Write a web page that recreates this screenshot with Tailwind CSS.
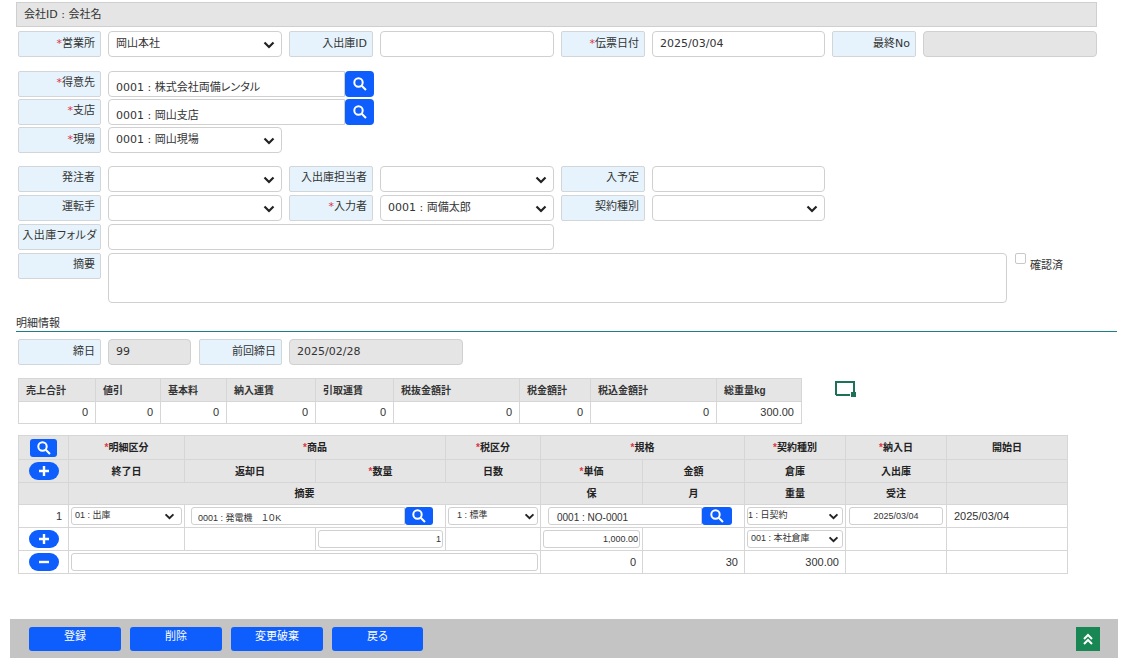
<!DOCTYPE html>
<html lang="ja">
<head>
<meta charset="UTF-8">
<title>入出庫</title>
<script src="https://cdn.jsdelivr.net/npm/@tailwindcss/browser@4"></script>
</head>
<body class="bg-white text-[11px] text-[#333] [font-feature-settings:'palt'] font-['DejaVu_Sans','Noto_Sans_CJK_JP',sans-serif]">
<div class="w-[1140px] h-[670px] overflow-hidden relative pt-[2px]">

  <!-- company bar -->
  <div class="ml-[16px] w-[1081px] h-[25px] bg-[#e5e5e5] border border-[#cfcfcf] pl-[7px] leading-[23px]">会社ID : 会社名</div>

  <!-- form head -->
  <div class="ml-[18px] mt-[4px] grid grid-cols-[83px_174px_84px_174px_84px_173px_84px_174px] gap-x-[7px] h-[26px] [&>label]:bg-[#e6f3fc] [&>label]:border [&>label]:border-[#d2d6d9] [&>label]:rounded-[2px] [&>label]:text-right [&>label]:pr-[5px] [&>label]:leading-[24px] [&>input]:border [&>input]:border-[#d0d0d0] [&>input]:rounded-[4px] [&>input]:px-[7px]">
    <label><span class="text-[#dc3545]">*</span>営業所</label>
    <div class="relative">
      <select class="appearance-none w-full h-[26px] border border-[#d0d0d0] rounded-[4px] pl-[7px] bg-white"><option>岡山本社</option></select>
      <svg class="absolute right-[7px] top-[10px] w-[12px] h-[8px]" viewBox="0 0 12 8" fill="none" stroke="#222" stroke-width="2.2"><path d="M1.5 1.5 6 6l4.500-4.500"/></svg>
    </div>
    <label>入出庫ID</label>
    <input type="text" value="">
    <label><span class="text-[#dc3545]">*</span>伝票日付</label>
    <input type="text" value="2025/03/04">
    <label>最終No</label>
    <input type="text" value="" class="bg-[#e5e5e5]">
  </div>

  <!-- customer -->
  <div class="ml-[18px] mt-[14px] flex gap-x-[7px] h-[26px]">
    <label class="w-[83px] bg-[#e6f3fc] border border-[#d2d6d9] rounded-[2px] text-right pr-[5px] leading-[22px]"><span class="text-[#dc3545]">*</span>得意先</label>
    <div class="flex">
      <input type="text" value="0001 : 株式会社両備レンタル" class="w-[237px] h-[26px] border border-[#d0d0d0] rounded-l-[4px] pl-[7px] pt-[4px]">
      <button class="w-[29px] h-[26px] bg-[#0d5efc] rounded-[4px] flex items-center justify-center"><svg class="w-[14px] h-[14px]" viewBox="0 0 14 14" fill="none" stroke="#fff" stroke-width="2"><circle cx="5.500" cy="5.500" r="4.200"/><path d="m8.700 8.700 4.300 4.300"/></svg></button>
    </div>
  </div>
  <div class="ml-[18px] mt-[2px] flex gap-x-[7px] h-[26px]">
    <label class="w-[83px] bg-[#e6f3fc] border border-[#d2d6d9] rounded-[2px] text-right pr-[5px] leading-[22px]"><span class="text-[#dc3545]">*</span>支店</label>
    <div class="flex">
      <input type="text" value="0001 : 岡山支店" class="w-[237px] h-[26px] border border-[#d0d0d0] rounded-l-[4px] pl-[7px] pt-[4px]">
      <button class="w-[29px] h-[26px] bg-[#0d5efc] rounded-[4px] flex items-center justify-center"><svg class="w-[14px] h-[14px]" viewBox="0 0 14 14" fill="none" stroke="#fff" stroke-width="2"><circle cx="5.500" cy="5.500" r="4.200"/><path d="m8.700 8.700 4.300 4.300"/></svg></button>
    </div>
  </div>
  <div class="ml-[18px] mt-[2px] flex gap-x-[7px] h-[26px]">
    <label class="w-[83px] bg-[#e6f3fc] border border-[#d2d6d9] rounded-[2px] text-right pr-[5px] leading-[24px]"><span class="text-[#dc3545]">*</span>現場</label>
    <div class="relative w-[174px]">
      <select class="appearance-none w-full h-[26px] border border-[#d0d0d0] rounded-[4px] pl-[7px] bg-white"><option>0001 : 岡山現場</option></select>
      <svg class="absolute right-[7px] top-[10px] w-[12px] h-[8px]" viewBox="0 0 12 8" fill="none" stroke="#222" stroke-width="2.2"><path d="M1.5 1.5 6 6l4.500-4.500"/></svg>
    </div>
  </div>

  <!-- people -->
  <div class="ml-[18px] mt-[13px] grid grid-cols-[83px_174px_84px_174px_84px_173px] gap-x-[7px] gap-y-[3px] auto-rows-[26px] [&>label]:bg-[#e6f3fc] [&>label]:border [&>label]:border-[#d2d6d9] [&>label]:rounded-[2px] [&>label]:text-right [&>label]:pr-[5px] [&>label]:leading-[22px] [&>input]:border [&>input]:border-[#d0d0d0] [&>input]:rounded-[4px] [&>input]:px-[7px]">
    <label>発注者</label>
    <div class="relative">
      <select class="appearance-none w-full h-[26px] border border-[#d0d0d0] rounded-[4px] pl-[7px] bg-white"><option></option></select>
      <svg class="absolute right-[7px] top-[10px] w-[12px] h-[8px]" viewBox="0 0 12 8" fill="none" stroke="#222" stroke-width="2.2"><path d="M1.5 1.5 6 6l4.500-4.500"/></svg>
    </div>
    <label>入出庫担当者</label>
    <div class="relative">
      <select class="appearance-none w-full h-[26px] border border-[#d0d0d0] rounded-[4px] pl-[7px] bg-white"><option></option></select>
      <svg class="absolute right-[7px] top-[10px] w-[12px] h-[8px]" viewBox="0 0 12 8" fill="none" stroke="#222" stroke-width="2.2"><path d="M1.5 1.5 6 6l4.500-4.500"/></svg>
    </div>
    <label>入予定</label>
    <input type="text" value="">

    <label>運転手</label>
    <div class="relative">
      <select class="appearance-none w-full h-[26px] border border-[#d0d0d0] rounded-[4px] pl-[7px] bg-white"><option></option></select>
      <svg class="absolute right-[7px] top-[10px] w-[12px] h-[8px]" viewBox="0 0 12 8" fill="none" stroke="#222" stroke-width="2.2"><path d="M1.5 1.5 6 6l4.500-4.500"/></svg>
    </div>
    <label><span class="text-[#dc3545]">*</span>入力者</label>
    <div class="relative">
      <select class="appearance-none w-full h-[26px] border border-[#d0d0d0] rounded-[4px] pl-[7px] bg-white"><option>0001 : 両備太郎</option></select>
      <svg class="absolute right-[7px] top-[10px] w-[12px] h-[8px]" viewBox="0 0 12 8" fill="none" stroke="#222" stroke-width="2.2"><path d="M1.5 1.5 6 6l4.500-4.500"/></svg>
    </div>
    <label>契約種別</label>
    <div class="relative">
      <select class="appearance-none w-full h-[26px] border border-[#d0d0d0] rounded-[4px] pl-[7px] bg-white"><option></option></select>
      <svg class="absolute right-[7px] top-[10px] w-[12px] h-[8px]" viewBox="0 0 12 8" fill="none" stroke="#222" stroke-width="2.2"><path d="M1.5 1.5 6 6l4.500-4.500"/></svg>
    </div>

    <label class="whitespace-nowrap tracking-[0.5px] !pr-[3px]">入出庫フォルダ</label>
    <input type="text" value="" class="col-span-3">
  </div>

  <!-- memo -->
  <div class="ml-[18px] mt-[3px] flex gap-x-[7px] h-[50px]">
    <label class="w-[83px] h-[26px] bg-[#e6f3fc] border border-[#d2d6d9] rounded-[2px] text-right pr-[5px] leading-[22px]">摘要</label>
    <textarea class="w-[899px] h-[50px] border border-[#d0d0d0] rounded-[4px] resize-none"></textarea>
    <div class="flex ml-[1px]">
      <input type="checkbox" class="appearance-none w-[11px] h-[11px] border border-[#c8c8c8] rounded-[2px]">
      <span class="ml-[4px] mt-[5px] leading-[16px]">確認済</span>
    </div>
  </div>

  <!-- detail heading -->
  <div class="ml-[16px] mt-[11px] w-[1101px] h-[18px] border-b border-[#1d7f86] leading-[19px] text-[#333]">明細情報</div>

  <div class="ml-[18px] mt-[7px] flex gap-x-[7px] h-[26px]">
    <label class="w-[83px] bg-[#e6f3fc] border border-[#d2d6d9] rounded-[2px] text-right pr-[5px] leading-[24px]">締日</label>
    <input type="text" value="99" class="w-[83px] bg-[#e5e5e5] border border-[#d0d0d0] rounded-[4px] px-[7px]">
    <label class="ml-[1px] w-[83px] bg-[#e6f3fc] border border-[#d2d6d9] rounded-[2px] text-right pr-[5px] leading-[24px]">前回締日</label>
    <input type="text" value="2025/02/28" class="w-[174px] bg-[#e5e5e5] border border-[#d0d0d0] rounded-[4px] px-[7px]">
  </div>

  <!-- totals -->
  <div class="ml-[18px] mt-[13px] flex font-['Liberation_Sans','Noto_Sans_CJK_JP',sans-serif]">
    <table class="table-fixed border-collapse w-[783px] text-[11px] [&_td]:border [&_td]:border-[#d6d6d6] [&_td]:text-right [&_td]:pr-[7px] [&_td]:h-[22px] [&_th]:border [&_th]:border-[#d6d6d6] [&_th]:bg-[#e5e5e5] [&_th]:text-left [&_th]:pl-[7px] [&_th]:h-[23px] [&_th]:text-[10px] [&_th]:font-bold">
      <colgroup>
        <col class="w-[77px]"><col class="w-[65px]"><col class="w-[66px]"><col class="w-[89px]"><col class="w-[78px]"><col class="w-[126px]"><col class="w-[71px]"><col class="w-[126px]"><col class="w-[85px]">
      </colgroup>
      <tr><th>売上合計</th><th>値引</th><th>基本料</th><th>納入運賃</th><th>引取運賃</th><th>税抜金額計</th><th>税金額計</th><th>税込金額計</th><th>総重量kg</th></tr>
      <tr><td>0</td><td>0</td><td>0</td><td>0</td><td>0</td><td>0</td><td>0</td><td>0</td><td>300.00</td></tr>
    </table>
    <svg class="ml-[33px] mt-[3px] w-[21px] h-[16px]" viewBox="0 0 21 16" fill="none"><path d="M1 14V1h18v10M1 14h14" stroke="#1b7259" stroke-width="2"/><rect x="16" y="11" width="5" height="5" fill="#1b7259"/></svg>
  </div>

  <!-- detail table -->
  <table class="ml-[18px] mt-[11px] table-fixed border-collapse w-[1049px] text-[10px] font-['Liberation_Sans','Noto_Sans_CJK_JP',sans-serif] [&_td]:border [&_td]:border-[#d6d6d6] [&_th]:border [&_th]:border-[#d6d6d6] [&_th]:bg-[#e5e5e5] [&_th]:text-center [&_th]:font-bold [&_th]:text-[10px] [&_th]:text-[#222]">
    <colgroup>
      <col class="w-[50px]"><col class="w-[116px]"><col class="w-[131px]"><col class="w-[130px]"><col class="w-[95px]"><col class="w-[102px]"><col class="w-[102px]"><col class="w-[101px]"><col class="w-[101px]"><col class="w-[121px]">
    </colgroup>
    <tr class="h-[24px]">
      <th><button class="mx-auto w-[27px] h-[18px] bg-[#0d5efc] rounded-[3px] flex items-center justify-center"><svg class="w-[14px] h-[14px]" viewBox="0 0 14 14" fill="none" stroke="#fff" stroke-width="2"><circle cx="5.500" cy="5.500" r="4.200"/><path d="m8.700 8.700 4.300 4.300"/></svg></button></th>
      <th><span class="text-[#dc3545]">*</span>明細区分</th>
      <th colspan="2"><span class="text-[#dc3545]">*</span>商品</th>
      <th><span class="text-[#dc3545]">*</span>税区分</th>
      <th colspan="2"><span class="text-[#dc3545]">*</span>規格</th>
      <th><span class="text-[#dc3545]">*</span>契約種別</th>
      <th><span class="text-[#dc3545]">*</span>納入日</th>
      <th>開始日</th>
    </tr>
    <tr class="h-[23px]">
      <th><button class="mx-auto w-[30px] h-[18px] bg-[#0d5efc] rounded-full flex items-center justify-center"><svg class="w-[12px] h-[12px]" viewBox="0 0 12 12" stroke="#fff" stroke-width="2.400"><path d="M6 1v10M1 6h10"/></svg></button></th>
      <th>終了日</th>
      <th>返却日</th>
      <th><span class="text-[#dc3545]">*</span>数量</th>
      <th>日数</th>
      <th><span class="text-[#dc3545]">*</span>単価</th>
      <th>金額</th>
      <th>倉庫</th>
      <th>入出庫</th>
      <th></th>
    </tr>
    <tr class="h-[22px]">
      <th></th>
      <th colspan="4">摘要</th>
      <th>保</th>
      <th>月</th>
      <th>重量</th>
      <th>受注</th>
      <th></th>
    </tr>
    <tr class="h-[23px]">
      <td class="text-right pr-[6px] text-[11px]">1</td>
      <td class="px-[2px]">
        <div class="relative">
          <select class="appearance-none w-full h-[18px] border border-[#d0d0d0] rounded-[3px] pl-[3px] bg-white text-[9px]"><option>01 : 出庫</option></select>
          <svg class="absolute right-[7px] top-[6px] w-[11px] h-[7px]" viewBox="0 0 12 8" fill="none" stroke="#222" stroke-width="2.2"><path d="M1.5 1.5 6 6l4.500-4.500"/></svg>
        </div>
      </td>
      <td colspan="2" class="pl-[6px] pr-[12px]">
        <div class="flex">
          <input type="text" value="0001 : 発電機　１０K" class="w-[214px] h-[18px] border border-[#d0d0d0] rounded-l-[3px] pl-[6px] pt-[3px] text-[9px]">
          <button class="w-[28px] h-[18px] bg-[#0d5efc] rounded-[3px] flex items-center justify-center"><svg class="w-[14px] h-[14px]" viewBox="0 0 14 14" fill="none" stroke="#fff" stroke-width="2"><circle cx="5.500" cy="5.500" r="4.200"/><path d="m8.700 8.700 4.300 4.300"/></svg></button>
        </div>
      </td>
      <td class="px-[2px]">
        <div class="relative">
          <select class="appearance-none w-full h-[18px] border border-[#d0d0d0] rounded-[3px] pl-[8px] bg-white text-[9px]"><option>1 : 標準</option></select>
          <svg class="absolute right-[3px] top-[6px] w-[11px] h-[7px]" viewBox="0 0 12 8" fill="none" stroke="#222" stroke-width="2.2"><path d="M1.5 1.5 6 6l4.500-4.500"/></svg>
        </div>
      </td>
      <td colspan="2" class="pl-[7px] pr-[12px]">
        <div class="flex">
          <input type="text" value="0001 : NO-0001" class="w-[155px] h-[18px] border border-[#d0d0d0] rounded-l-[3px] pl-[8px] pt-[3px] text-[10px]">
          <button class="w-[30px] h-[18px] bg-[#0d5efc] rounded-[3px] flex items-center justify-center"><svg class="w-[14px] h-[14px]" viewBox="0 0 14 14" fill="none" stroke="#fff" stroke-width="2"><circle cx="5.500" cy="5.500" r="4.200"/><path d="m8.700 8.700 4.300 4.300"/></svg></button>
        </div>
      </td>
      <td class="px-[2px]">
        <div class="relative">
          <select class="appearance-none w-full h-[18px] border border-[#d0d0d0] rounded-[3px] bg-white text-[9px]"><option>1 : 日契約</option></select>
          <svg class="absolute right-[4px] top-[6px] w-[11px] h-[7px]" viewBox="0 0 12 8" fill="none" stroke="#222" stroke-width="2.2"><path d="M1.5 1.5 6 6l4.500-4.500"/></svg>
        </div>
      </td>
      <td class="px-[3px]"><input type="text" value="2025/03/04" class="w-full h-[18px] border border-[#d0d0d0] rounded-[3px] text-center text-[9px]"></td>
      <td class="pl-[7px] text-[11px]">2025/03/04</td>
    </tr>
    <tr class="h-[23px]">
      <td><button class="block mx-auto w-[30px] h-[18px] bg-[#0d5efc] rounded-full flex items-center justify-center"><svg class="w-[12px] h-[12px]" viewBox="0 0 12 12" stroke="#fff" stroke-width="2.400"><path d="M6 1v10M1 6h10"/></svg></button></td>
      <td></td>
      <td></td>
      <td class="px-[2px]"><input type="text" value="1" class="w-full h-[18px] border border-[#d0d0d0] rounded-[3px] text-right pr-[1px] text-[9px]"></td>
      <td></td>
      <td class="px-[2px]"><input type="text" value="1,000.00" class="w-full h-[18px] border border-[#d0d0d0] rounded-[3px] text-right pr-[1px] text-[9px]"></td>
      <td></td>
      <td class="px-[2px]">
        <div class="relative">
          <select class="appearance-none w-full h-[18px] border border-[#d0d0d0] rounded-[3px] pl-[3px] bg-white text-[9px]"><option>001 : 本社倉庫</option></select>
          <svg class="absolute right-[4px] top-[6px] w-[11px] h-[7px]" viewBox="0 0 12 8" fill="none" stroke="#222" stroke-width="2.2"><path d="M1.5 1.5 6 6l4.500-4.500"/></svg>
        </div>
      </td>
      <td></td>
      <td></td>
    </tr>
    <tr class="h-[23px]">
      <td><button class="block mx-auto w-[30px] h-[18px] bg-[#0d5efc] rounded-full flex items-center justify-center"><svg class="w-[12px] h-[12px]" viewBox="0 0 12 12" stroke="#fff" stroke-width="2.400"><path d="M1 6h10"/></svg></button></td>
      <td colspan="4" class="px-[2px]"><input type="text" value="" class="w-full h-[18px] border border-[#d0d0d0] rounded-[3px]"></td>
      <td class="text-right pr-[6px] text-[11px]">0</td>
      <td class="text-right pr-[6px] text-[11px]">30</td>
      <td class="text-right pr-[6px] text-[11px]">300.00</td>
      <td></td>
      <td></td>
    </tr>
  </table>

  <!-- footer buttons -->
  <div class="ml-[10px] mt-[45px] w-[1108px] h-[39px] bg-[#c4c4c4] flex items-center pl-[19px] pr-[18px] gap-x-[9px] text-white text-[11px]">
    <button class="w-[92px] h-[24px] bg-[#0d5efc] rounded-[3px] pb-[2px]">登録</button>
    <button class="w-[92px] h-[24px] bg-[#0d5efc] rounded-[3px] pb-[2px]">削除</button>
    <button class="w-[92px] h-[24px] bg-[#0d5efc] rounded-[3px] pb-[2px]">変更破棄</button>
    <button class="w-[91px] h-[24px] bg-[#0d5efc] rounded-[3px] pb-[2px]">戻る</button>
    <button class="ml-auto w-[24px] h-[24px] bg-[#198754] flex items-center justify-center"><svg class="w-[12px] h-[12px]" viewBox="0 0 12 12" fill="none" stroke="#fff" stroke-width="2"><path d="M2 6l4-4 4 4M2 11l4-4 4 4"/></svg></button>
  </div>
</div>
</body>
</html>
